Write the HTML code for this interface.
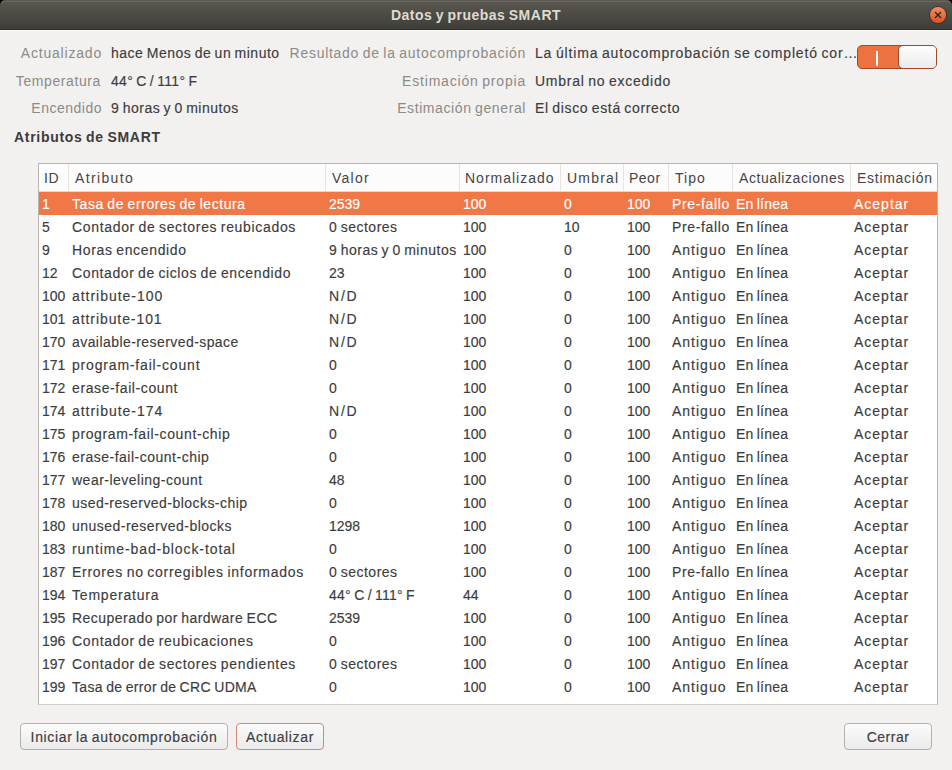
<!DOCTYPE html>
<html><head><meta charset="utf-8">
<style>
*{margin:0;padding:0;box-sizing:border-box}
html,body{width:952px;height:770px;overflow:hidden;background:#f2f1f0;font-family:"Liberation Sans",sans-serif;font-size:14px;color:#3c3c3c;letter-spacing:0.5px;word-spacing:-1px;-webkit-text-stroke:0.15px currentColor}
.tb .t,.bold{-webkit-text-stroke:0}
.blk{position:absolute;left:0;top:0;width:952px;height:8px;background:#000}
.tb{position:absolute;left:0;top:0;width:952px;height:30px;background:linear-gradient(#5a5850,#3f3e39);border-radius:5px 5px 0 0;border-bottom:1px solid #2e2d2a}
.tb:before{content:"";position:absolute;left:1px;right:1px;top:1px;height:5px;border-top:1px solid #6b695e;border-radius:4px 4px 0 0}
.hl{position:absolute;left:0;top:30px;width:952px;height:1px;background:#fbfbfa}
.tb .t{position:absolute;left:0;right:0;top:7px;text-align:center;color:#dfdbd2;font-weight:bold;font-size:14px}
.cl{position:absolute;left:930px;top:7px;width:16px;height:16px;border-radius:50%;background:linear-gradient(#f58d64,#e0511b);box-shadow:0 0 0 1px #33332f}
.cl svg{position:absolute;left:0;top:0}

.a{position:absolute;white-space:nowrap}
.lb{color:#8c8a86;text-align:right;-webkit-text-stroke:0}
.sw{position:absolute;left:857px;top:45px;width:80px;height:24px;border:1px solid #a04a25;border-radius:5px;background:#ec723f;overflow:hidden}
.sw .k{position:absolute;left:40px;top:-1px;width:40px;height:24px;border:1px solid #9a4a28;border-radius:5px;background:linear-gradient(#fdfdfd,#ebebeb)}
.sw .bar{position:absolute;left:18px;top:5px;width:2px;height:15px;background:#fff}
.tbl{position:absolute;left:38px;top:163px;width:900px;height:542px;border:1px solid #b8b5b0;border-bottom-color:#d0cdc8;background:#fff;overflow:hidden}
.hd{position:absolute;left:0;top:0;width:898px;height:28px;border-bottom:1px solid #dcdad6;background:#fcfcfc}
.hd span{position:absolute;top:6px;color:#454545;-webkit-text-stroke:0}
.sep{position:absolute;top:0;width:1px;height:27px;background:#e6e4e0}
.row{position:absolute;left:0;width:898px;height:23px}
.row span{position:absolute;top:4px}
.n{letter-spacing:0}
.sel{background:#f07746;color:#fff}
.btn{position:absolute;height:27px;border:1px solid #b5b1aa;border-radius:4px;background:linear-gradient(#fbfbfb,#ebebeb);text-align:center;padding-top:5px}
</style></head><body>
<div class="blk"></div><div class="tb"><div class="t">Datos y pruebas SMART</div><div class="cl"><svg width="16" height="16" viewBox="0 0 16 16"><path d="M5 5L11 11M11 5L5 11" stroke="#1f2418" stroke-width="1.2" fill="none"/><circle cx="8" cy="8" r="1" fill="#1f2a14"/></svg></div></div><div class="hl"></div>

<div class="a lb" style="right:850px;top:45px;letter-spacing:0.8px">Actualizado</div>
<div class="a" style="left:111px;top:45px">hace Menos de un minuto</div>
<div class="a lb" style="right:426px;top:45px;letter-spacing:0.72px">Resultado de la autocomprobación</div>
<div class="a" style="left:535px;top:45px;letter-spacing:0.83px">La última autocomprobación se completó cor…</div>
<div class="sw"><div class="bar"></div><div class="k"></div></div>

<div class="a lb" style="right:851px;top:73px;letter-spacing:0.6px">Temperatura</div>
<div class="a" style="left:111px;top:73px;letter-spacing:0.3px">44° C / 111° F</div>
<div class="a lb" style="right:426px;top:73px;letter-spacing:0.8px">Estimación propia</div>
<div class="a" style="left:535px;top:73px;letter-spacing:0.75px">Umbral no excedido</div>

<div class="a lb" style="right:850px;top:100px">Encendido</div>
<div class="a" style="left:111px;top:100px">9 horas y 0 minutos</div>
<div class="a lb" style="right:426px;top:100px;letter-spacing:0.6px">Estimación general</div>
<div class="a" style="left:535px;top:100px;letter-spacing:0.65px">El disco está correcto</div>

<div class="a bold" style="left:14px;top:129px;font-weight:bold;letter-spacing:0.7px">Atributos de SMART</div>

<div class="tbl" id="tbl">
<div class="hd">
<span style="left:5px">ID</span><div class="sep" style="left:29px"></div>
<span style="left:36px;letter-spacing:1.35px">Atributo</span><div class="sep" style="left:286px"></div>
<span style="left:293px;letter-spacing:1.25px">Valor</span><div class="sep" style="left:420px"></div>
<span style="left:426px;letter-spacing:1px">Normalizado</span><div class="sep" style="left:521px"></div>
<span style="left:528px;letter-spacing:1.2px">Umbral</span><div class="sep" style="left:584px"></div>
<span style="left:590px">Peor</span><div class="sep" style="left:629px"></div>
<span style="left:636px;letter-spacing:1px">Tipo</span><div class="sep" style="left:693px"></div>
<span style="left:700px;letter-spacing:0.57px">Actualizaciones</span><div class="sep" style="left:811px"></div>
<span style="left:818px;letter-spacing:0.72px">Estimación</span>
</div>
<!--R-->
<div class="row sel" style="top:28px"><span class="n" style="left:3px">1</span><span style="left:33px;letter-spacing:0.58px">Tasa de errores de lectura</span><span class="n" style="left:290px">2539</span><span class="n" style="left:424px">100</span><span class="n" style="left:525px">0</span><span class="n" style="left:588px">100</span><span style="left:633px;letter-spacing:0.65px">Pre-fallo</span><span style="left:697px;letter-spacing:0.25px">En línea</span><span style="left:815px;letter-spacing:1.0px">Aceptar</span></div>
<div class="row" style="top:51px"><span class="n" style="left:3px">5</span><span style="left:33px;letter-spacing:0.67px">Contador de sectores reubicados</span><span style="left:290px">0 sectores</span><span class="n" style="left:424px">100</span><span class="n" style="left:525px">10</span><span class="n" style="left:588px">100</span><span style="left:633px;letter-spacing:0.65px">Pre-fallo</span><span style="left:697px;letter-spacing:0.25px">En línea</span><span style="left:815px;letter-spacing:1.0px">Aceptar</span></div>
<div class="row" style="top:74px"><span class="n" style="left:3px">9</span><span style="left:33px;letter-spacing:0.66px">Horas encendido</span><span style="left:290px">9 horas y 0 minutos</span><span class="n" style="left:424px">100</span><span class="n" style="left:525px">0</span><span class="n" style="left:588px">100</span><span style="left:633px;letter-spacing:1.0px">Antiguo</span><span style="left:697px;letter-spacing:0.25px">En línea</span><span style="left:815px;letter-spacing:1.0px">Aceptar</span></div>
<div class="row" style="top:97px"><span class="n" style="left:3px">12</span><span style="left:33px;letter-spacing:0.62px">Contador de ciclos de encendido</span><span class="n" style="left:290px">23</span><span class="n" style="left:424px">100</span><span class="n" style="left:525px">0</span><span class="n" style="left:588px">100</span><span style="left:633px;letter-spacing:1.0px">Antiguo</span><span style="left:697px;letter-spacing:0.25px">En línea</span><span style="left:815px;letter-spacing:1.0px">Aceptar</span></div>
<div class="row" style="top:120px"><span class="n" style="left:3px">100</span><span style="left:33px;letter-spacing:0.97px">attribute-100</span><span style="left:290px;letter-spacing:1.8px">N/D</span><span class="n" style="left:424px">100</span><span class="n" style="left:525px">0</span><span class="n" style="left:588px">100</span><span style="left:633px;letter-spacing:1.0px">Antiguo</span><span style="left:697px;letter-spacing:0.25px">En línea</span><span style="left:815px;letter-spacing:1.0px">Aceptar</span></div>
<div class="row" style="top:143px"><span class="n" style="left:3px">101</span><span style="left:33px;letter-spacing:0.92px">attribute-101</span><span style="left:290px;letter-spacing:1.8px">N/D</span><span class="n" style="left:424px">100</span><span class="n" style="left:525px">0</span><span class="n" style="left:588px">100</span><span style="left:633px;letter-spacing:1.0px">Antiguo</span><span style="left:697px;letter-spacing:0.25px">En línea</span><span style="left:815px;letter-spacing:1.0px">Aceptar</span></div>
<div class="row" style="top:166px"><span class="n" style="left:3px">170</span><span style="left:33px;letter-spacing:0.43px">available-reserved-space</span><span style="left:290px;letter-spacing:1.8px">N/D</span><span class="n" style="left:424px">100</span><span class="n" style="left:525px">0</span><span class="n" style="left:588px">100</span><span style="left:633px;letter-spacing:1.0px">Antiguo</span><span style="left:697px;letter-spacing:0.25px">En línea</span><span style="left:815px;letter-spacing:1.0px">Aceptar</span></div>
<div class="row" style="top:189px"><span class="n" style="left:3px">171</span><span style="left:33px;letter-spacing:0.82px">program-fail-count</span><span class="n" style="left:290px">0</span><span class="n" style="left:424px">100</span><span class="n" style="left:525px">0</span><span class="n" style="left:588px">100</span><span style="left:633px;letter-spacing:1.0px">Antiguo</span><span style="left:697px;letter-spacing:0.25px">En línea</span><span style="left:815px;letter-spacing:1.0px">Aceptar</span></div>
<div class="row" style="top:212px"><span class="n" style="left:3px">172</span><span style="left:33px;letter-spacing:0.60px">erase-fail-count</span><span class="n" style="left:290px">0</span><span class="n" style="left:424px">100</span><span class="n" style="left:525px">0</span><span class="n" style="left:588px">100</span><span style="left:633px;letter-spacing:1.0px">Antiguo</span><span style="left:697px;letter-spacing:0.25px">En línea</span><span style="left:815px;letter-spacing:1.0px">Aceptar</span></div>
<div class="row" style="top:235px"><span class="n" style="left:3px">174</span><span style="left:33px;letter-spacing:0.97px">attribute-174</span><span style="left:290px;letter-spacing:1.8px">N/D</span><span class="n" style="left:424px">100</span><span class="n" style="left:525px">0</span><span class="n" style="left:588px">100</span><span style="left:633px;letter-spacing:1.0px">Antiguo</span><span style="left:697px;letter-spacing:0.25px">En línea</span><span style="left:815px;letter-spacing:1.0px">Aceptar</span></div>
<div class="row" style="top:258px"><span class="n" style="left:3px">175</span><span style="left:33px;letter-spacing:0.63px">program-fail-count-chip</span><span class="n" style="left:290px">0</span><span class="n" style="left:424px">100</span><span class="n" style="left:525px">0</span><span class="n" style="left:588px">100</span><span style="left:633px;letter-spacing:1.0px">Antiguo</span><span style="left:697px;letter-spacing:0.25px">En línea</span><span style="left:815px;letter-spacing:1.0px">Aceptar</span></div>
<div class="row" style="top:281px"><span class="n" style="left:3px">176</span><span style="left:33px;letter-spacing:0.50px">erase-fail-count-chip</span><span class="n" style="left:290px">0</span><span class="n" style="left:424px">100</span><span class="n" style="left:525px">0</span><span class="n" style="left:588px">100</span><span style="left:633px;letter-spacing:1.0px">Antiguo</span><span style="left:697px;letter-spacing:0.25px">En línea</span><span style="left:815px;letter-spacing:1.0px">Aceptar</span></div>
<div class="row" style="top:304px"><span class="n" style="left:3px">177</span><span style="left:33px;letter-spacing:0.49px">wear-leveling-count</span><span class="n" style="left:290px">48</span><span class="n" style="left:424px">100</span><span class="n" style="left:525px">0</span><span class="n" style="left:588px">100</span><span style="left:633px;letter-spacing:1.0px">Antiguo</span><span style="left:697px;letter-spacing:0.25px">En línea</span><span style="left:815px;letter-spacing:1.0px">Aceptar</span></div>
<div class="row" style="top:327px"><span class="n" style="left:3px">178</span><span style="left:33px;letter-spacing:0.45px">used-reserved-blocks-chip</span><span class="n" style="left:290px">0</span><span class="n" style="left:424px">100</span><span class="n" style="left:525px">0</span><span class="n" style="left:588px">100</span><span style="left:633px;letter-spacing:1.0px">Antiguo</span><span style="left:697px;letter-spacing:0.25px">En línea</span><span style="left:815px;letter-spacing:1.0px">Aceptar</span></div>
<div class="row" style="top:350px"><span class="n" style="left:3px">180</span><span style="left:33px;letter-spacing:0.48px">unused-reserved-blocks</span><span class="n" style="left:290px">1298</span><span class="n" style="left:424px">100</span><span class="n" style="left:525px">0</span><span class="n" style="left:588px">100</span><span style="left:633px;letter-spacing:1.0px">Antiguo</span><span style="left:697px;letter-spacing:0.25px">En línea</span><span style="left:815px;letter-spacing:1.0px">Aceptar</span></div>
<div class="row" style="top:373px"><span class="n" style="left:3px">183</span><span style="left:33px;letter-spacing:0.90px">runtime-bad-block-total</span><span class="n" style="left:290px">0</span><span class="n" style="left:424px">100</span><span class="n" style="left:525px">0</span><span class="n" style="left:588px">100</span><span style="left:633px;letter-spacing:1.0px">Antiguo</span><span style="left:697px;letter-spacing:0.25px">En línea</span><span style="left:815px;letter-spacing:1.0px">Aceptar</span></div>
<div class="row" style="top:396px"><span class="n" style="left:3px">187</span><span style="left:33px;letter-spacing:0.73px">Errores no corregibles informados</span><span style="left:290px">0 sectores</span><span class="n" style="left:424px">100</span><span class="n" style="left:525px">0</span><span class="n" style="left:588px">100</span><span style="left:633px;letter-spacing:0.65px">Pre-fallo</span><span style="left:697px;letter-spacing:0.25px">En línea</span><span style="left:815px;letter-spacing:1.0px">Aceptar</span></div>
<div class="row" style="top:419px"><span class="n" style="left:3px">194</span><span style="left:33px;letter-spacing:0.80px">Temperatura</span><span style="left:290px;letter-spacing:0.27px">44° C / 111° F</span><span class="n" style="left:424px">44</span><span class="n" style="left:525px">0</span><span class="n" style="left:588px">100</span><span style="left:633px;letter-spacing:1.0px">Antiguo</span><span style="left:697px;letter-spacing:0.25px">En línea</span><span style="left:815px;letter-spacing:1.0px">Aceptar</span></div>
<div class="row" style="top:442px"><span class="n" style="left:3px">195</span><span style="left:33px;letter-spacing:0.46px">Recuperado por hardware ECC</span><span class="n" style="left:290px">2539</span><span class="n" style="left:424px">100</span><span class="n" style="left:525px">0</span><span class="n" style="left:588px">100</span><span style="left:633px;letter-spacing:1.0px">Antiguo</span><span style="left:697px;letter-spacing:0.25px">En línea</span><span style="left:815px;letter-spacing:1.0px">Aceptar</span></div>
<div class="row" style="top:465px"><span class="n" style="left:3px">196</span><span style="left:33px;letter-spacing:0.65px">Contador de reubicaciones</span><span class="n" style="left:290px">0</span><span class="n" style="left:424px">100</span><span class="n" style="left:525px">0</span><span class="n" style="left:588px">100</span><span style="left:633px;letter-spacing:1.0px">Antiguo</span><span style="left:697px;letter-spacing:0.25px">En línea</span><span style="left:815px;letter-spacing:1.0px">Aceptar</span></div>
<div class="row" style="top:488px"><span class="n" style="left:3px">197</span><span style="left:33px;letter-spacing:0.67px">Contador de sectores pendientes</span><span style="left:290px">0 sectores</span><span class="n" style="left:424px">100</span><span class="n" style="left:525px">0</span><span class="n" style="left:588px">100</span><span style="left:633px;letter-spacing:1.0px">Antiguo</span><span style="left:697px;letter-spacing:0.25px">En línea</span><span style="left:815px;letter-spacing:1.0px">Aceptar</span></div>
<div class="row" style="top:511px"><span class="n" style="left:3px">199</span><span style="left:33px;letter-spacing:0.34px">Tasa de error de CRC UDMA</span><span class="n" style="left:290px">0</span><span class="n" style="left:424px">100</span><span class="n" style="left:525px">0</span><span class="n" style="left:588px">100</span><span style="left:633px;letter-spacing:1.0px">Antiguo</span><span style="left:697px;letter-spacing:0.25px">En línea</span><span style="left:815px;letter-spacing:1.0px">Aceptar</span></div>
<div class="row" style="top:534px"><span class="n" style="left:3px">232</span><span style="left:33px;letter-spacing:0.33px">Available Reserved Space</span><span class="n" style="left:290px">0</span><span class="n" style="left:424px">100</span><span class="n" style="left:525px">0</span><span class="n" style="left:588px">100</span><span style="left:633px;letter-spacing:1.0px">Antiguo</span><span style="left:697px;letter-spacing:0.25px">En línea</span><span style="left:815px;letter-spacing:1.0px">Aceptar</span></div>
<!--/R-->
</div>

<div class="btn" style="left:20px;top:723px;width:208px;letter-spacing:0.65px">Iniciar la autocomprobación</div>
<div class="btn" style="left:236px;top:723px;width:88px;border-color:#d9876a;letter-spacing:0.65px">Actualizar</div>
<div class="btn" style="left:844px;top:723px;width:88px">Cerrar</div>
</body></html>
